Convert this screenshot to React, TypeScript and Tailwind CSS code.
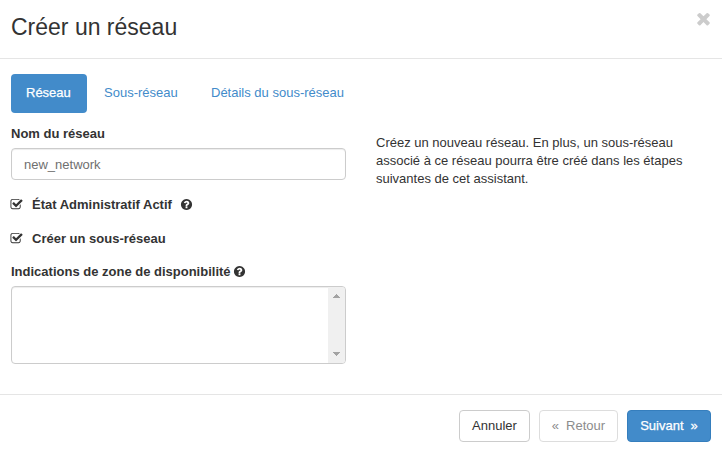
const HELP =
  'M1024 1376v-192q0-14-9-23t-23-9h-192q-14 0-23 9t-9 23v192q0 14 9 23t23 9h192q14 0 23-9t9-23zm256-672q0-88-55.5-163t-138.5-116-170-41q-243 0-371 213-15 24 8 42l132 100q7 6 19 6 16 0 25-12 53-68 86-92 34-24 86-24 48 0 85.5 26t37.5 59q0 38-20 61t-68 45q-63 28-115.5 86.5t-52.5 125.5v36q0 14 9 23t23 9h192q14 0 23-9t9-23q0-19 21.5-49.5t54.5-49.5q32-18 49-28.5t46-35 44.5-48 28-60.5 12.5-81zm384 192q0 209-103 385.5t-279.5 279.5-385.5 103-385.5-103-279.5-279.5-103-385.5 103-385.5 279.5-279.5 385.5-103 385.5 103 279.5 279.5 103 385.5z';
const CHECK =
  'M1472 930v318q0 119-84.5 203.5t-203.5 84.5h-832q-119 0-203.5-84.5t-84.5-203.5v-832q0-119 84.5-203.5t203.5-84.5h832q63 0 117 25 15 7 18 23 3 17-9 29l-49 49q-10 10-23 10-3 0-9-2-23-6-45-6h-832q-66 0-113 47t-47 113v832q0 66 47 113t113 47h832q66 0 113-47t47-113v-254q0-13 9-22l64-64q10-10 23-10 6 0 12 3 20 8 20 29zm231-489l-814 814q-24 24-57 24t-57-24l-430-430q-24-24-24-57t24-57l110-110q24-24 57-24t57 24l263 263 647-647q24-24 57-24t57 24l110 110q24 24 24 57t-24 57z';
const CLOSE =
  'M1490 1322q0 40-28 68l-136 136q-28 28-68 28t-68-28l-294-294-294 294q-28 28-68 28t-68-28l-136-136q-28-28-28-68t28-68l294-294-294-294q-28-28-28-68t28-68l136-136q28-28 68-28t68 28l294 294 294-294q28-28 68-28t68 28l136 136q28 28 28 68t-28 68l-294 294 294 294q28 28 28 68z';

function Icon({ d, className }: { d: string; className: string }) {
  return (
    <svg viewBox="0 0 1792 1792" fill="currentColor" className={`shrink-0 ${className}`} aria-hidden="true">
      <path d={d} />
    </svg>
  );
}

function CheckRow({ label, help }: { label: string; help?: boolean }) {
  return (
    <label className="flex h-[18px] items-start font-bold">
      <Icon d={CHECK} className="mt-[2px] -ml-px size-[13px]" />
      <span className="ml-[9px]">{label}</span>
      {help && <Icon d={HELP} className="mt-[2px] ml-2 size-[13px]" />}
    </label>
  );
}

export default function App() {
  return (
    <div className="flex h-[453px] w-[722px] flex-col bg-white font-['Liberation_Sans',Arial,sans-serif] text-[13px] leading-[18px] text-[#333333]">
      <header className="flex h-[59px] items-start justify-between border-b border-[#e5e5e5] pt-[9px] pr-[9px] pl-[11px]">
        <h4 className="text-[23px] leading-[36px]">Créer un réseau</h4>
        <button aria-label="Fermer" className="text-[#cccccc]">
          <Icon d={CLOSE} className="size-[19px]" />
        </button>
      </header>

      <main className="flex h-[335px] flex-col pt-[15px] pl-[11px]">
        <nav className="flex h-[39px] gap-[2px]">
          <a className="w-[76px] rounded-[4px] bg-[#428bca] pt-[10px] pl-[15px] text-white [-webkit-text-stroke:0.25px]">Réseau</a>
          <a className="w-[105px] pt-[10px] pl-[15px] text-[#428bca]">Sous-réseau</a>
          <a className="pt-[10px] pl-[15px] text-[#428bca]">Détails du sous-réseau</a>
        </nav>

        <div className="flex gap-[30px] pt-[12px]">
          <section className="w-[335px]">
            <label className="block font-bold">Nom du réseau</label>
            <input
              defaultValue="new_network"
              className="mt-[5px] block h-[32px] w-full rounded-[4px] border border-[#cccccc] px-3 text-[13px] text-[#6f6f6f] shadow-[inset_0_1px_1px_rgba(0,0,0,0.075)] outline-none"
            />
            <div className="flex flex-col gap-4 pt-4">
              <CheckRow label="État Administratif Actif" help />
              <CheckRow label="Créer un sous-réseau" />
            </div>
            <div className="flex items-start pt-[15px] font-bold">
              Indications de zone de disponibilité
              <Icon d={HELP} className="mt-[2px] ml-[2px] size-[13px]" />
            </div>
            <div className="mt-[5px] flex h-[78px] justify-end overflow-hidden rounded-[4px] border border-[#cccccc] shadow-[inset_0_1px_1px_rgba(0,0,0,0.075)]">
              <div className="flex w-[17px] flex-col items-center justify-between bg-[#f0f0f0] py-[7px]">
                <svg viewBox="0 0 7 4" shapeRendering="crispEdges" className="h-[4px] w-[7px] fill-[#a3a3a3]">
                  <path d="M3 0h1v1h1v1h1v1h1v1H0V3h1V2h1V1h1Z" />
                </svg>
                <svg viewBox="0 0 7 4" shapeRendering="crispEdges" className="h-[4px] w-[7px] fill-[#a3a3a3]">
                  <path d="M0 0h7v1H6v1H5v1H4v1H3V3H2V2H1V1H0Z" />
                </svg>
              </div>
            </div>
          </section>
          <p className="w-[320px] pt-[9px]">
            Créez un nouveau réseau. En plus, un sous-réseau
            <br />
            associé à ce réseau pourra être créé dans les étapes
            <br />
            suivantes de cet assistant.
          </p>
        </div>
      </main>

      <footer className="flex h-[59px] justify-end gap-[9px] border-t border-[#e5e5e5] pt-[15px] pr-[11px]">
        <button className="h-8 w-[71px] rounded-[4px] border border-[#cccccc]">Annuler</button>
        <button className="flex h-8 w-[79px] items-center justify-center gap-[7px] rounded-[4px] border border-[#dddddd] text-[#8c8c8c]">
          <span>«</span>
          <span>Retour</span>
        </button>
        <button className="flex h-8 w-[84px] items-center justify-center gap-[7px] rounded-[4px] border border-[#357ebd] bg-[#428bca] text-white [-webkit-text-stroke:0.25px]">
          <span>Suivant</span>
          <span>»</span>
        </button>
      </footer>
    </div>
  );
}
